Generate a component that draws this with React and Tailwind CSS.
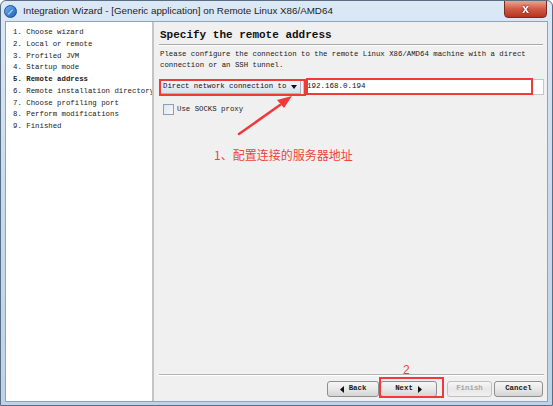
import React from "react";

const steps = [
  { n: "1.", label: "Choose wizard" },
  { n: "2.", label: "Local or remote" },
  { n: "3.", label: "Profiled JVM" },
  { n: "4.", label: "Startup mode" },
  { n: "5.", label: "Remote address", active: true },
  { n: "6.", label: "Remote installation directory" },
  { n: "7.", label: "Choose profiling port" },
  { n: "8.", label: "Perform modifications" },
  { n: "9.", label: "Finished" },
];

const mono = "font-['Liberation_Mono','DejaVu_Sans_Mono',monospace]";

const WinButton = ({ children, className = "", disabled }) => (
  <div
    className={`h-[16px] flex items-center justify-center gap-[5px] rounded-[3px] border border-[#8e8f8f] bg-gradient-to-b from-[#f6f6f6] via-[#e8e8e8] to-[#d4d4d4] text-[7.4px] font-bold ${mono} ${
      disabled ? "text-[#a8a8a8] border-[#c0c0c0] from-[#f4f4f4] to-[#f0f0f0]" : "text-[#1a1a1a]"
    } ${className}`}
  >
    {children}
  </div>
);

export default function App() {
  return (
    <div className="relative w-[553px] h-[406px] overflow-hidden rounded-t-[6px] border border-[#5b6d82] bg-gradient-to-b from-[#dbe8f6] via-[#c7dbef] to-[#bcd3ea] flex flex-col">
      {/* title bar */}
      <div className="h-[20px] flex items-center pl-[3px] shrink-0">
        <div className="w-[13px] h-[13px] rounded-full bg-gradient-to-br from-[#6fb1f0] to-[#1d62b8] border border-[#1a4f90] flex items-center justify-center">
          <svg width="7" height="7" viewBox="0 0 7 7">
            <path d="M1 6 L5.5 1.5 L6 2 L1.5 6.5 Z" fill="#fff" />
          </svg>
        </div>
        <span className="ml-[6px] text-[9.8px] text-[#1e1e1e] font-['Liberation_Sans',Arial,sans-serif]">
          Integration Wizard - [Generic application] on Remote Linux X86/AMD64
        </span>
      </div>
      <div className="absolute top-[-1px] right-[5px] w-[43px] h-[18px] rounded-b-[4px] border border-[#7a2a22] bg-gradient-to-b from-[#e8a493] via-[#cf5a44] to-[#b8321d] flex items-center justify-center">
        <span className="text-white text-[12px] font-bold leading-none font-['Liberation_Sans',Arial,sans-serif] drop-shadow-[0_0_1px_#5a1a10]">
          x
        </span>
      </div>

      {/* client area */}
      <div className="mx-[4px] h-[381px] border border-[#8ea4bd] flex bg-[#f0f0f0]">
        <div className={`w-[148px] shrink-0 bg-white border-r-2 border-[#c4c4c4] pt-[5px] pl-[7px] overflow-hidden whitespace-nowrap ${mono} text-[7.35px] text-[#1a1a1a]`}>
          {steps.map((s) => (
            <div key={s.n} className={`h-[11.75px] leading-[11.75px] ${s.active ? "font-bold" : ""}`}>
              {s.n} {s.label}
            </div>
          ))}
        </div>

        <div className="flex-1 flex flex-col pl-[5px] pr-[3px] min-w-0">
          <div className={`mt-[6px] h-[14px] leading-[14px] pl-[1px] text-[11px] font-bold ${mono} text-[#111]`}>
            Specify the remote address
          </div>
          <div className="mt-[2px] h-[2px] border-t border-[#a9a9a9] border-b border-b-white mr-[1px]" />
          <div className={`mt-[3px] pl-[1px] text-[7.35px] leading-[11px] ${mono} text-[#1a1a1a]`}>
            <div>Please configure the connection to the remote Linux X86/AMD64 machine with a direct</div>
            <div>connection or an SSH tunnel.</div>
          </div>

          <div className="mt-[8px] flex items-center h-[16px]">
            <div className={`w-[142px] h-[14px] flex items-center justify-between px-[3px] border border-[#a8b5c4] bg-gradient-to-b from-[#f3f7fb] to-[#d6e2ee] text-[7.35px] ${mono} text-[#111]`}>
              <span>Direct network connection to</span>
              <svg width="6" height="4" viewBox="0 0 6 4">
                <path d="M0 0 H6 L3 4 Z" fill="#111" />
              </svg>
            </div>
            <div className={`ml-[2px] flex-1 h-[16px] border border-[#c5c5c5] bg-white flex items-center pl-[3px] text-[7.5px] ${mono} text-[#111]`}>
              192.168.0.194
            </div>
          </div>

          <div className="mt-[9px] ml-[4px] flex items-center gap-[3px]">
            <div className="w-[11px] h-[11px] border border-[#8e9fb3] bg-gradient-to-br from-[#dde5ee] to-[#f6f8fa]" />
            <span className={`text-[7.35px] ${mono} text-[#1a1a1a]`}>Use SOCKS proxy</span>
          </div>

          <div className="flex-1" />
          <div className="h-[2px] border-t border-[#b4b4b4] border-b border-b-white" />
          <div className="mt-[5px] mb-[4px] flex justify-end pr-[1px]">
            <WinButton className="w-[52px]">
              <svg width="4" height="7" viewBox="0 0 4 7">
                <path d="M4 0 V7 L0 3.5 Z" fill="#111" />
              </svg>
              <span>Back</span>
            </WinButton>
            <WinButton className="w-[57px] ml-[1px]">
              <span>Next</span>
              <svg width="4" height="7" viewBox="0 0 4 7">
                <path d="M0 0 V7 L4 3.5 Z" fill="#111" />
              </svg>
            </WinButton>
            <WinButton className="w-[45px] ml-[10px]" disabled>
              Finish
            </WinButton>
            <WinButton className="w-[49px] ml-[2px]">Cancel</WinButton>
          </div>
        </div>
      </div>

      {/* annotations */}
      <div className="absolute left-[158px] top-[78px] w-[147px] h-[17px] border-2 border-[#f03a3a]" />
      <div className="absolute left-[305px] top-[77px] w-[227px] h-[17px] border-2 border-[#f03a3a]" />
      <div className="absolute left-[378px] top-[376px] w-[65px] h-[21px] border-2 border-[#f03a3a]" />
      <div className="absolute left-[402px] top-[362px] text-[12px] leading-[14px] text-[#f0443a] font-['Liberation_Sans',Arial,sans-serif]">
        2
      </div>
      <div className="absolute left-[213px] top-[146px] text-[12px] leading-[16px] text-[#f0443a] font-['Noto_Sans_CJK_SC',sans-serif] whitespace-nowrap">
        1、配置连接的服务器地址
      </div>
      <svg className="absolute left-0 top-0 pointer-events-none" width="553" height="406">
        <path d="M238 133 L279 104" stroke="#f03a3a" strokeWidth="2.5" strokeLinecap="round" />
        <path d="M291 95 L276 99 L283 107 Z" fill="#f03a3a" />
      </svg>
    </div>
  );
}
